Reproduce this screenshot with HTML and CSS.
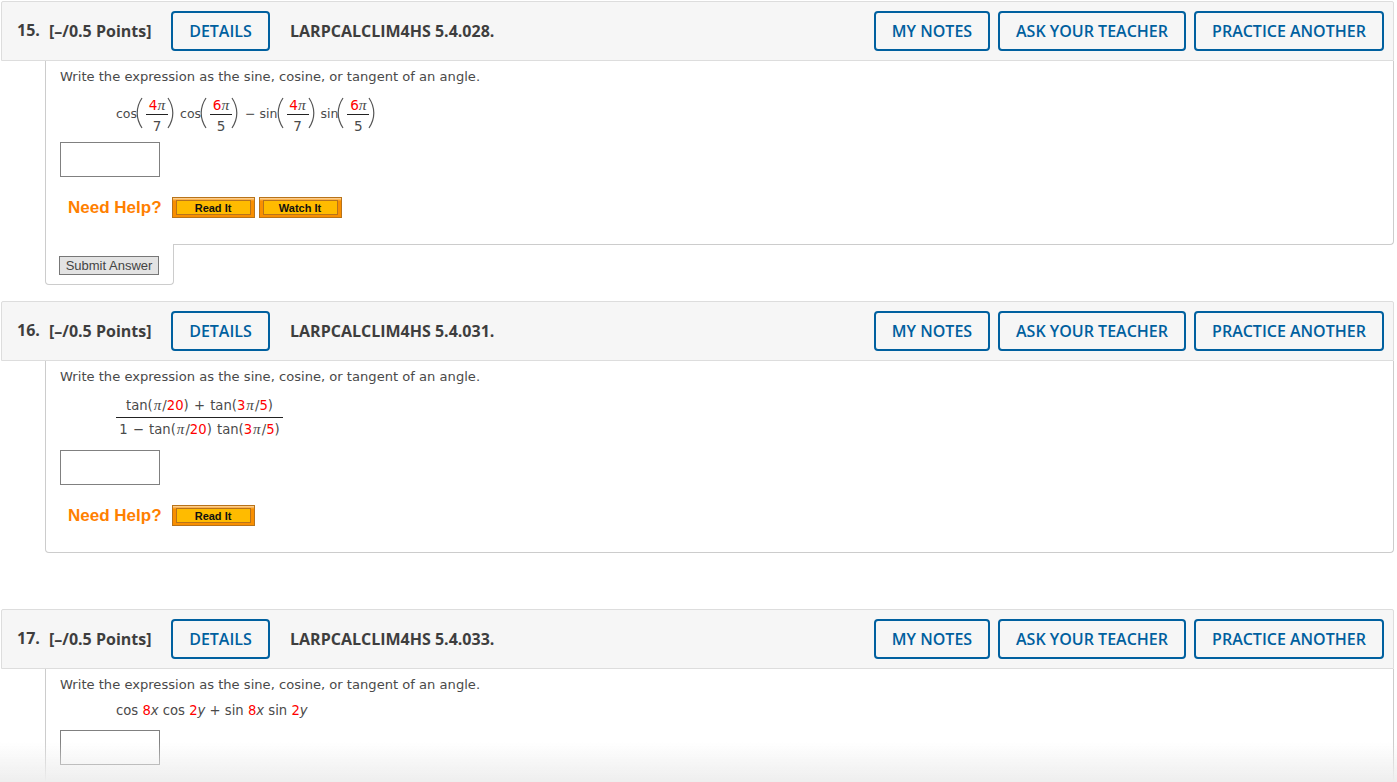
FILE: index.html
```html
<!DOCTYPE html>
<html lang="en">
<head>
<meta charset="utf-8">
<title>Questions</title>
<link rel="stylesheet" href="styles.css">
</head>
<body>
<main class="page">

<section class="question q15">
  <header class="qhead">
    <span class="qnum">15.</span>
    <span class="points">[–/0.5 Points]</span>
    <a class="btn details">DETAILS</a>
    <span class="code">LARPCALCLIM4HS 5.4.028.</span>
    <a class="btn notes">MY NOTES</a>
    <a class="btn ask">ASK YOUR TEACHER</a>
    <a class="btn practice">PRACTICE ANOTHER</a>
  </header>
  <div class="qbody has-tab">
    <p class="prompt">Write the expression as the sine, cosine, or tangent of an angle.</p>
    <div class="math trig">
      <span class="fn">cos</span>
      <svg class="paren" viewBox="0 0 7 32"><path d="M6 1C2 7 1.200 12 1.200 16S2 25 6 31"/></svg>
      <span class="frac small"><span class="num"><b>4</b><i class="pi">π</i></span><span class="den">7</span></span>
      <svg class="paren" viewBox="0 0 7 32"><path d="M1 1C5 7 5.800 12 5.800 16S5 25 1 31"/></svg>
      <span class="fn gap">cos</span>
      <svg class="paren" viewBox="0 0 7 32"><path d="M6 1C2 7 1.200 12 1.200 16S2 25 6 31"/></svg>
      <span class="frac small"><span class="num"><b>6</b><i class="pi">π</i></span><span class="den">5</span></span>
      <svg class="paren" viewBox="0 0 7 32"><path d="M1 1C5 7 5.800 12 5.800 16S5 25 1 31"/></svg>
      <span class="fn minus">−</span>
      <span class="fn">sin</span>
      <svg class="paren" viewBox="0 0 7 32"><path d="M6 1C2 7 1.200 12 1.200 16S2 25 6 31"/></svg>
      <span class="frac small"><span class="num"><b>4</b><i class="pi">π</i></span><span class="den">7</span></span>
      <svg class="paren" viewBox="0 0 7 32"><path d="M1 1C5 7 5.800 12 5.800 16S5 25 1 31"/></svg>
      <span class="fn gap">sin</span>
      <svg class="paren" viewBox="0 0 7 32"><path d="M6 1C2 7 1.200 12 1.200 16S2 25 6 31"/></svg>
      <span class="frac small"><span class="num"><b>6</b><i class="pi">π</i></span><span class="den">5</span></span>
      <svg class="paren" viewBox="0 0 7 32"><path d="M1 1C5 7 5.800 12 5.800 16S5 25 1 31"/></svg>
    </div>
    <input class="answer" type="text" aria-label="Answer">
    <div class="help">
      <span class="help-label">Need Help?</span>
      <a class="help-btn"><span>Read It</span></a>
      <a class="help-btn"><span>Watch It</span></a>
    </div>
  </div>
  <div class="submit-tab"><button class="submit">Submit Answer</button></div>
</section>

<section class="question q16">
  <header class="qhead">
    <span class="qnum">16.</span>
    <span class="points">[–/0.5 Points]</span>
    <a class="btn details">DETAILS</a>
    <span class="code">LARPCALCLIM4HS 5.4.031.</span>
    <a class="btn notes">MY NOTES</a>
    <a class="btn ask">ASK YOUR TEACHER</a>
    <a class="btn practice">PRACTICE ANOTHER</a>
  </header>
  <div class="qbody">
    <p class="prompt">Write the expression as the sine, cosine, or tangent of an angle.</p>
    <div class="math bigfrac">
      <span class="frac wide">
        <span class="num">tan(<i class="pi">π</i>/<b>20</b>) + tan(<b>3</b><i class="pi">π</i>/<b>5</b>)</span>
        <span class="den">1 − tan(<i class="pi">π</i>/<b>20</b>) tan(<b>3</b><i class="pi">π</i>/<b>5</b>)</span>
      </span>
    </div>
    <input class="answer" type="text" aria-label="Answer">
    <div class="help">
      <span class="help-label">Need Help?</span>
      <a class="help-btn"><span>Read It</span></a>
    </div>
  </div>
</section>

<section class="question q17">
  <header class="qhead">
    <span class="qnum">17.</span>
    <span class="points">[–/0.5 Points]</span>
    <a class="btn details">DETAILS</a>
    <span class="code">LARPCALCLIM4HS 5.4.033.</span>
    <a class="btn notes">MY NOTES</a>
    <a class="btn ask">ASK YOUR TEACHER</a>
    <a class="btn practice">PRACTICE ANOTHER</a>
  </header>
  <div class="qbody">
    <p class="prompt">Write the expression as the sine, cosine, or tangent of an angle.</p>
    <div class="math inline">cos <b>8</b><i>x</i> cos <b>2</b><i>y</i> + sin <b>8</b><i>x</i> sin <b>2</b><i>y</i></div>
    <input class="answer" type="text" aria-label="Answer">
  </div>
</section>

</main>
<div class="fade"></div>
</body>
</html>
```

FILE: styles.css
```css
* { box-sizing: border-box; }
html, body { margin: 0; padding: 0; background: #fff; height: 782px; overflow: hidden; }
body { font-family: "DejaVu Sans", Verdana, sans-serif; color: #444; }
.page { padding: 1px 3px 0 1px; width: 1397px; }

.question { display: flow-root; }
.q15 { margin-bottom: 16px; }
.q16 { margin-bottom: 56px; }

.qhead {
  height: 60px;
  display: flex;
  align-items: center;
  background: #f6f6f6;
  border: 1px solid #ddd;
  border-radius: 2px 2px 0 0;
  padding: 0 9px 0 15px;
  font-family: "Open Sans", sans-serif;
  font-size: 16px;
  font-weight: 600;
  color: #3e3e3e;
}
.qnum { font-weight: 700; width: 32px; position: relative; top: -1px; }
.points { font-weight: 700; font-size: 16px; width: 122px; }
.code { margin-left: 20px; margin-right: auto; font-weight: 700; font-size: 16px; }
.btn {
  display: flex;
  align-items: center;
  justify-content: center;
  height: 40px;
  border: 2px solid #00609f;
  border-radius: 4px;
  color: #00609f;
  font-size: 16px;
  font-weight: 600;
  background: #f6f6f6;
}
.details { width: 99px; }
.notes { width: 116px; }
.ask { width: 188px; margin-left: 8px; }
.practice { width: 190px; margin-left: 8px; }

.qbody {
  margin-left: 44px;
  border: 1px solid #ccc;
  border-top: 0;
  border-radius: 0 0 4px 4px;
  padding: 0 14px;
  display: flow-root;
}
.qbody.has-tab { border-bottom-left-radius: 0; height: 184px; }
.q16 .qbody { height: 192px; }
.q17 .qbody { height: 120px; border-bottom: 0; }

.prompt { margin: 8px 0 0; font-size: 13.100px; line-height: 16px; color: #4a4a4a; }

.math { font-size: 13.200px; margin-left: 56px; color: #4a4a4a; }
.math b { color: #f00; font-weight: 400; }
.math i { font-style: italic; }
.math i.pi { font-family: "Liberation Serif", serif; font-size: 1.150em; }

.trig { display: flex; align-items: center; height: 36px; margin-top: 10px; font-size: 12.500px; }
.paren { width: 7px; height: 32px; flex: none; }
.paren path { fill: none; stroke: #555; stroke-width: 1.200; }
.fn { margin-right: -1px; }
.fn.gap { margin-left: 6px; }
.fn.minus { margin: 0 4px 0 7px; }

.frac { display: inline-flex; flex-direction: column; align-items: center; }
.frac .num { border-bottom: 1px solid #222; padding-bottom: 2px; line-height: 16px; width: 100%; text-align: center; }
.frac .den { line-height: 16px; padding-top: 2px; }
.frac.small { width: 22px; margin: 4px -1px 0 3px; font-size: 13.600px; }
.frac.small .num { padding-bottom: 1px; }
.frac.small .den { padding-top: 3px; }
.bigfrac { margin-top: 12px; height: 40px; }
.frac.wide { word-spacing: 1px; }
.frac.wide .pi { margin: 0 1px; }
.frac.wide .num { padding: 0 10px 3px; }
.frac.wide .den { padding: 3px 3px 0; }

.inline { margin-top: 10px; line-height: 16px; }

.answer {
  display: block;
  width: 100px;
  height: 35px;
  margin-top: 11px;
  border: 1px solid #808080;
  background: #fff;
  padding: 0;
}
.q16 .answer { margin-top: 13px; }
.q17 .answer { margin-top: 11px; }

.help { display: flex; align-items: center; margin: 20px 0 0 8px; height: 21px; }
.help-label {
  font-family: "Liberation Sans", Arial, sans-serif;
  font-size: 17px;
  font-weight: 700;
  color: #ff8000;
  margin-right: 10px;
}
.help-btn {
  display: block;
  width: 83px;
  height: 21px;
  margin-right: 4px;
  padding: 2px 3px;
  background: linear-gradient(#fcd9a8 0, #f98f00 3px, #f98f00 100%);
  border: 1px solid #b8731a;
}
.help-btn span {
  display: flex;
  align-items: center;
  justify-content: center;
  height: 100%;
  background: #ffbb00;
  border: 1px solid #b8731a;
  font-family: "Liberation Sans", Arial, sans-serif;
  font-size: 11px;
  font-weight: 700;
  color: #111;
}

.submit-tab {
  position: relative;
  margin: -1px 0 0 44px;
  width: 129px;
  height: 41px;
  background: #fff;
  border: 1px solid #ccc;
  border-top: 0;
  border-radius: 0 0 4px 4px;
  padding-top: 12px;
  padding-left: 13px;
}
.submit {
  display: block;
  width: 100px;
  height: 19px;
  padding: 0;
  background: #e3e3e3;
  border: 1px solid #777;
  font-family: "Liberation Sans", Arial, sans-serif;
  font-size: 13px;
  color: #444;
}

.fade {
  position: fixed;
  left: 0;
  right: 0;
  bottom: 0;
  height: 40px;
  background: linear-gradient(rgba(238,238,238,0), rgba(238,238,238,1));
  pointer-events: none;
}
```
